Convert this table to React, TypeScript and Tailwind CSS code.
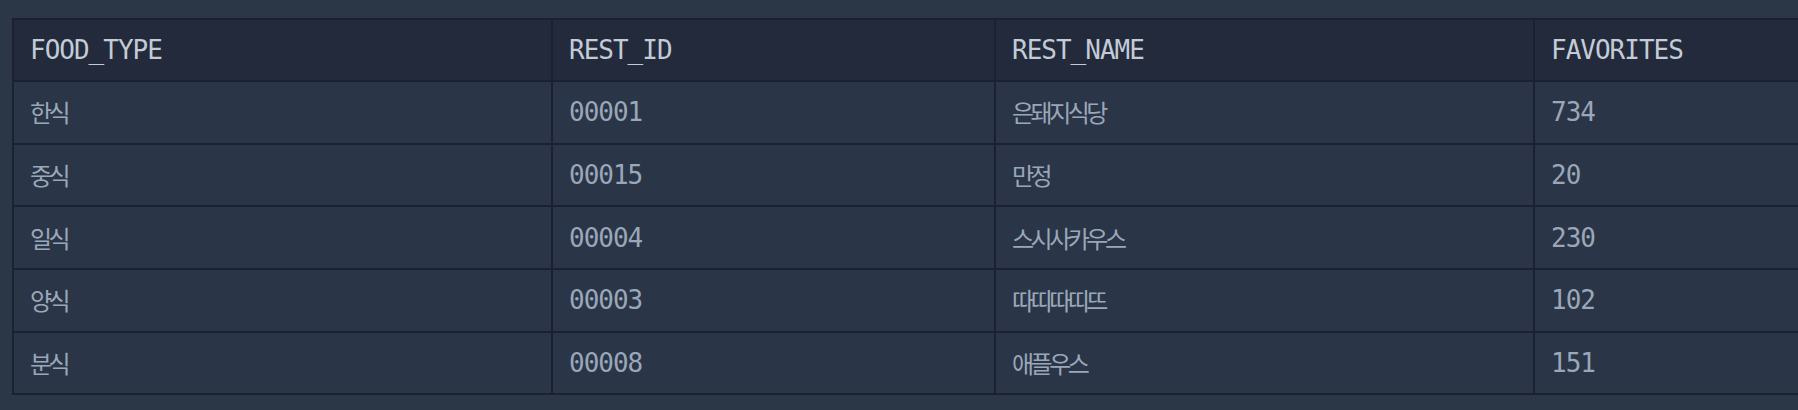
const rows = [
  { type: '한식', id: '00001', name: '은돼지식당', fav: '734' },
  { type: '중식', id: '00015', name: '만정', fav: '20' },
  { type: '일식', id: '00004', name: '스시사카우스', fav: '230' },
  { type: '양식', id: '00003', name: '따띠따띠뜨', fav: '102' },
  { type: '분식', id: '00008', name: '애플우스', fav: '151' },
];

const mono = "font-['DejaVu_Sans_Mono',monospace] text-[26px] tracking-[-1px]";
const kor = "font-['Noto_Sans_CJK_KR','Noto_Sans',sans-serif] text-[24px] tracking-[-3.5px]";

export default function App() {
  return (
    <div className="w-[1798px] h-[410px] overflow-hidden bg-[#2b3647] pt-[18px] pl-3">
      <table className="table-fixed border-separate border-spacing-[2px] bg-[#1b2130] w-[2062px]">
        <thead>
          <tr>
            {['FOOD_TYPE', 'REST_ID', 'REST_NAME', 'FAVORITES'].map((h, i) => (
              <th
                key={h}
                className={`h-[60px] p-0 px-4 text-left font-normal leading-none bg-[#222a3b] text-[#c3cbd6] ${mono} ${
                  i === 1 ? 'w-[441px]' : 'w-[537px]'
                }`}
              >
                {h}
              </th>
            ))}
          </tr>
        </thead>
        <tbody>
          {rows.map((r) => (
            <tr key={r.id}>
              <td className={`h-[60.67px] p-0 px-4 leading-none bg-[#2a3547] text-[#9aa7b9] ${kor}`}>{r.type}</td>
              <td className={`h-[60.67px] p-0 px-4 leading-none bg-[#2a3547] text-[#9aa7b9] ${mono}`}>{r.id}</td>
              <td className={`h-[60.67px] p-0 px-4 leading-none bg-[#2a3547] text-[#9aa7b9] ${kor}`}>{r.name}</td>
              <td className={`h-[60.67px] p-0 px-4 leading-none bg-[#2a3547] text-[#9aa7b9] ${mono}`}>{r.fav}</td>
            </tr>
          ))}
        </tbody>
      </table>
    </div>
  );
}
